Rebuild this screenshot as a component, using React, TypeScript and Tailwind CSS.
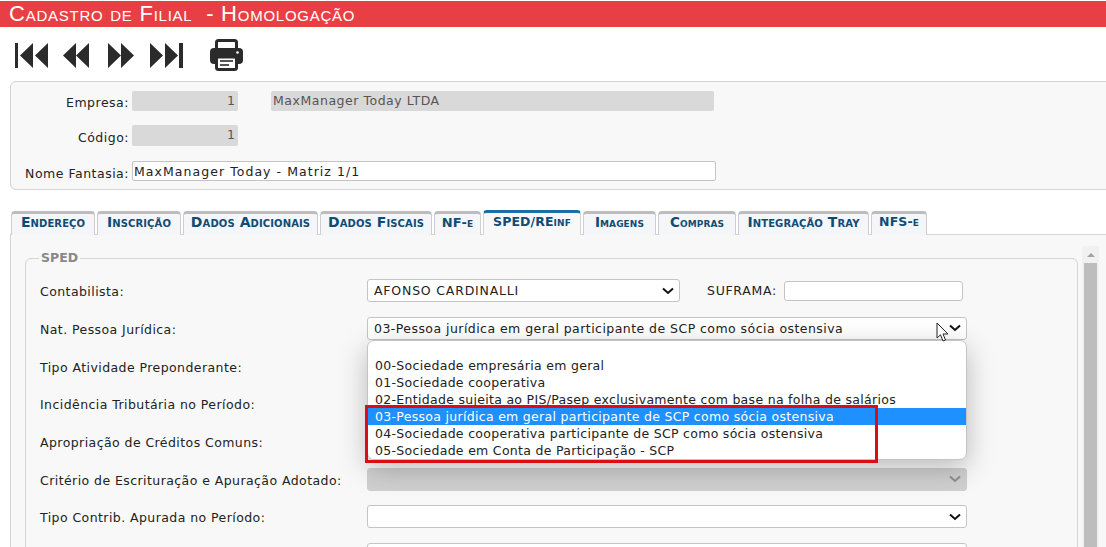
import React from 'react'

const font = "font-['DejaVu_Sans',Verdana,sans-serif]"

const tabs = [
  { label: 'Endereço', w: 'w-[84px] text-[14px]' },
  { label: 'Inscrição', w: 'w-[84px] text-[14px]' },
  { label: 'Dados Adicionais', w: 'w-[135px] text-[14px]' },
  { label: 'Dados Fiscais', w: 'w-[112px] text-[14px]' },
  { label: 'NF-e', w: 'w-[47px] text-[13px]' },
  { label: 'SPED/REinf', w: 'w-[98px] text-[12.5px]', active: true },
  { label: 'Imagens', w: 'w-[73px] text-[13.5px]' },
  { label: 'Compras', w: 'w-[78px] text-[13.5px]' },
  { label: 'Integração Tray', w: 'w-[131px] text-[14px]' },
  { label: 'NFS-e', w: 'w-[56px] text-[12.5px]' },
]

const options = [
  '00-Sociedade empresária em geral',
  '01-Sociedade cooperativa',
  '02-Entidade sujeita ao PIS/Pasep exclusivamente com base na folha de salários',
  '03-Pessoa jurídica em geral participante de SCP como sócia ostensiva',
  '04-Sociedade cooperativa participante de SCP como sócia ostensiva',
  '05-Sociedade em Conta de Participação - SCP',
]

function Chevron({ muted = false }: { muted?: boolean }) {
  return (
    <svg width="12" height="8" viewBox="0 0 12 8" className="shrink-0">
      <path d="M1 1.5 L6 6 L11 1.5" fill="none" stroke={muted ? '#8f8f8f' : '#111'} strokeWidth="2" />
    </svg>
  )
}

function Printer() {
  return (
    <svg width="33" height="32" viewBox="0 0 33 32" className="ml-[27px] shrink-0">
      <rect x="6.5" y="1.5" width="20" height="12" rx="2" fill="#fff" stroke="#2b2b2b" strokeWidth="3" />
      <rect x="0" y="9" width="33" height="16" rx="4" fill="#2b2b2b" />
      <circle cx="27.5" cy="13.5" r="1.3" fill="#fff" />
      <rect x="6.5" y="18" width="20" height="12.5" rx="2" fill="#fff" stroke="#2b2b2b" strokeWidth="3" />
      <rect x="10" y="21" width="13" height="2" fill="#555" />
      <rect x="10" y="25" width="9" height="2" fill="#555" />
    </svg>
  )
}

function Select({
  value,
  disabled = false,
  className = '',
  track = 'tracking-[0.45px]',
}: {
  value?: string
  disabled?: boolean
  className?: string
  track?: string
}) {
  return (
    <div
      className={`flex h-[23px] items-center justify-between rounded-[3px] border pl-[6px] pr-[5px] text-[12.5px] ${
        disabled ? 'border-[#cfcfcf] bg-[#d0d0d0]' : 'border-[#c4c4c4] bg-white'
      } ${className}`}
    >
      <span className={`truncate pt-[2px] text-[#222] ${track}`}>{value}</span>
      <Chevron muted={disabled} />
    </div>
  )
}

function Row({ label, children }: { label: string; children?: React.ReactNode }) {
  return (
    <div className="flex h-[37.7px] items-center">
      <span className="w-[327px] shrink-0 pt-[4px] text-[12.5px] tracking-[0.43px] text-[#222]">{label}</span>
      {children}
    </div>
  )
}

export default function App() {
  return (
    <div className={`relative h-[547px] w-[1106px] overflow-hidden bg-white ${font}`}>
      {/* Title bar */}
      <div className="mt-px flex h-[26px] items-center bg-[#e83f45] pb-[2px] pl-[9px] font-['Liberation_Sans',Arial,sans-serif] text-[22px] tracking-[0.75px] whitespace-pre text-white [font-variant:small-caps]">
        Cadastro de Filial  - Homologação
      </div>

      {/* Toolbar */}
      <div className="flex h-[54px] items-center pl-[15px] pt-[2px]">
        <svg width="33" height="25" viewBox="0 0 33 25" className="shrink-0">
          <path d="M0 0 H3 V25 H0 Z M18 0 V25 L5 12.5 Z M33 0 V25 L20 12.5 Z" fill="#2b2b2b" />
        </svg>
        <svg width="26" height="25" viewBox="0 0 26 25" className="ml-[15px] shrink-0">
          <path d="M13 0 V25 L0 12.5 Z M26 0 V25 L13 12.5 Z" fill="#2b2b2b" />
        </svg>
        <svg width="26" height="25" viewBox="0 0 26 25" className="ml-[19px] shrink-0">
          <path d="M0 0 V25 L13 12.5 Z M13 0 V25 L26 12.5 Z" fill="#2b2b2b" />
        </svg>
        <svg width="33" height="25" viewBox="0 0 33 25" className="ml-[16px] shrink-0">
          <path d="M0 0 V25 L13 12.5 Z M15 0 V25 L28 12.5 Z M29 0 H33 V25 H29 Z" fill="#2b2b2b" />
        </svg>
        <Printer />
      </div>

      {/* Header panel */}
      <div className="ml-[10px] h-[109px] w-[1110px] rounded-l-[6px] border border-[#d4d4d4] bg-[#f8f8f8] text-[12.5px] text-[#222]">
        <div className="flex h-[36px] items-center pt-[2px]">
          <span className="w-[118px] pt-[5px] text-right tracking-[0.5px]">Empresa:</span>
          <div className="ml-[3px] flex h-[20px] w-[106px] items-center justify-end rounded-[2px] bg-[#d9d9d9] pr-[3px] text-[#555]">1</div>
          <div className="ml-[33px] flex h-[20px] w-[443px] items-center rounded-[2px] bg-[#d9d9d9] pl-[2px] tracking-[0.53px] text-[#555]">MaxManager Today LTDA</div>
        </div>
        <div className="flex h-[35px] items-center">
          <span className="w-[118px] pt-[5px] text-right tracking-[0.5px]">Código:</span>
          <div className="ml-[3px] flex h-[21px] w-[106px] items-center justify-end rounded-[2px] bg-[#d9d9d9] pr-[3px] text-[#555]">1</div>
        </div>
        <div className="flex h-[36px] items-center">
          <span className="w-[118px] pt-[6px] text-right tracking-[0.5px]">Nome Fantasia:</span>
          <div className="ml-[3px] flex h-[20px] w-[584px] items-center rounded-[2px] border border-[#c4c4c4] bg-white pl-[1px] pt-[2px] tracking-[1.05px]">MaxManager Today - Matriz 1/1</div>
        </div>
      </div>

      {/* Tabs */}
      <div className="relative z-10 ml-[11px] mt-[20px] flex h-[24px] items-start gap-[2px]">
        {tabs.map((t) => (
          <div
            key={t.label}
            className={`flex items-center justify-center rounded-t-[4px] border-x border-t-[3px] pb-[4px] font-bold tracking-[0.1px] whitespace-nowrap text-[#0f4c75] [font-variant:small-caps] ${t.w} ${
              t.active
                ? 'h-[25px] border-x-[#d4d4d4] border-t-[#1a6fa5] bg-[#f8f8f8]'
                : 'mt-px h-[24px] border-x-[#cfcfcf] border-t-[#bdbdbd] bg-[#f4f6fa]'
            }`}
          >
            {t.label}
          </div>
        ))}
      </div>

      {/* Tab body */}
      <div className="ml-[10px] flex h-[400px] w-[1110px] border-l border-t border-[#d4d4d4] bg-[#f8f8f8] pl-[14px] pt-[14px]">
        <fieldset className="h-[400px] w-[1053px] shrink-0 rounded-[6px] border border-[#d4d4d4] px-[14px] pt-[4px]">
          <legend className="ml-[-1px] px-[2px] text-[12.5px] font-bold text-[#888]">SPED</legend>
          <Row label="Contabilista:">
            <Select value="AFONSO CARDINALLI" className="w-[313px]" track="tracking-[0.8px]" />
            <span className="ml-[27px] w-[77px] pt-[2px] text-[12.5px] tracking-[0.7px] text-[#222]">SUFRAMA:</span>
            <div className="h-[20px] w-[179px] rounded-[3px] border border-[#c4c4c4] bg-white" />
          </Row>
          <Row label="Nat. Pessoa Jurídica:">
            <Select value="03-Pessoa jurídica em geral participante de SCP como sócia ostensiva" className="w-[600px]" />
          </Row>
          <Row label="Tipo Atividade Preponderante:" />
          <Row label="Incidência Tributária no Período:" />
          <Row label="Apropriação de Créditos Comuns:" />
          <Row label="Critério de Escrituração e Apuração Adotado:">
            <Select disabled className="w-[600px]" />
          </Row>
          <Row label="Tipo Contrib. Apurada no Período:">
            <Select className="w-[600px]" />
          </Row>
          <Row label="">
            <Select className="w-[600px]" />
          </Row>
        </fieldset>
        {/* Scrollbar */}
        <div className="ml-[4px] -mt-[3px] flex h-[320px] w-[17px] shrink-0 flex-col items-center bg-[#f1f1f1] pt-[7px]">
          <div className="h-0 w-0 border-x-[4px] border-b-[4px] border-x-transparent border-b-[#a3a3a3]" />
          <div className="mt-[6px] h-[300px] w-[13px] bg-[#bdbdbd]" />
        </div>
      </div>

      {/* Open dropdown list */}
      <div className="absolute left-[367px] top-[340px] h-[120px] w-[600px] rounded-[7px] border border-[#c4c4c4] bg-white pt-[16px] text-[12.5px] leading-[17px] tracking-[0.3px] text-[#222] shadow-[0_8px_28px_rgba(0,0,0,0.25)]">
        {options.map((o, i) => (
          <div key={o} className={`h-[17px] pl-[7px] whitespace-nowrap ${i === 3 ? 'bg-[#1e90ff] text-white' : ''}`}>
            {o}
          </div>
        ))}
      </div>

      {/* Highlight box from the screenshot annotation */}
      <div className="absolute left-[365px] top-[405px] h-[58px] w-[513px] border-[3px] border-[#dc0d15]" />

      {/* Mouse cursor */}
      <svg width="14" height="21" viewBox="0 0 14 21" className="absolute left-[936px] top-[322px]">
        <path d="M1 1 V16 L4.5 12.8 L7 19 L9.5 18 L7 12 L12 12 Z" fill="#fff" stroke="#222" strokeWidth="1" />
      </svg>
    </div>
  )
}
